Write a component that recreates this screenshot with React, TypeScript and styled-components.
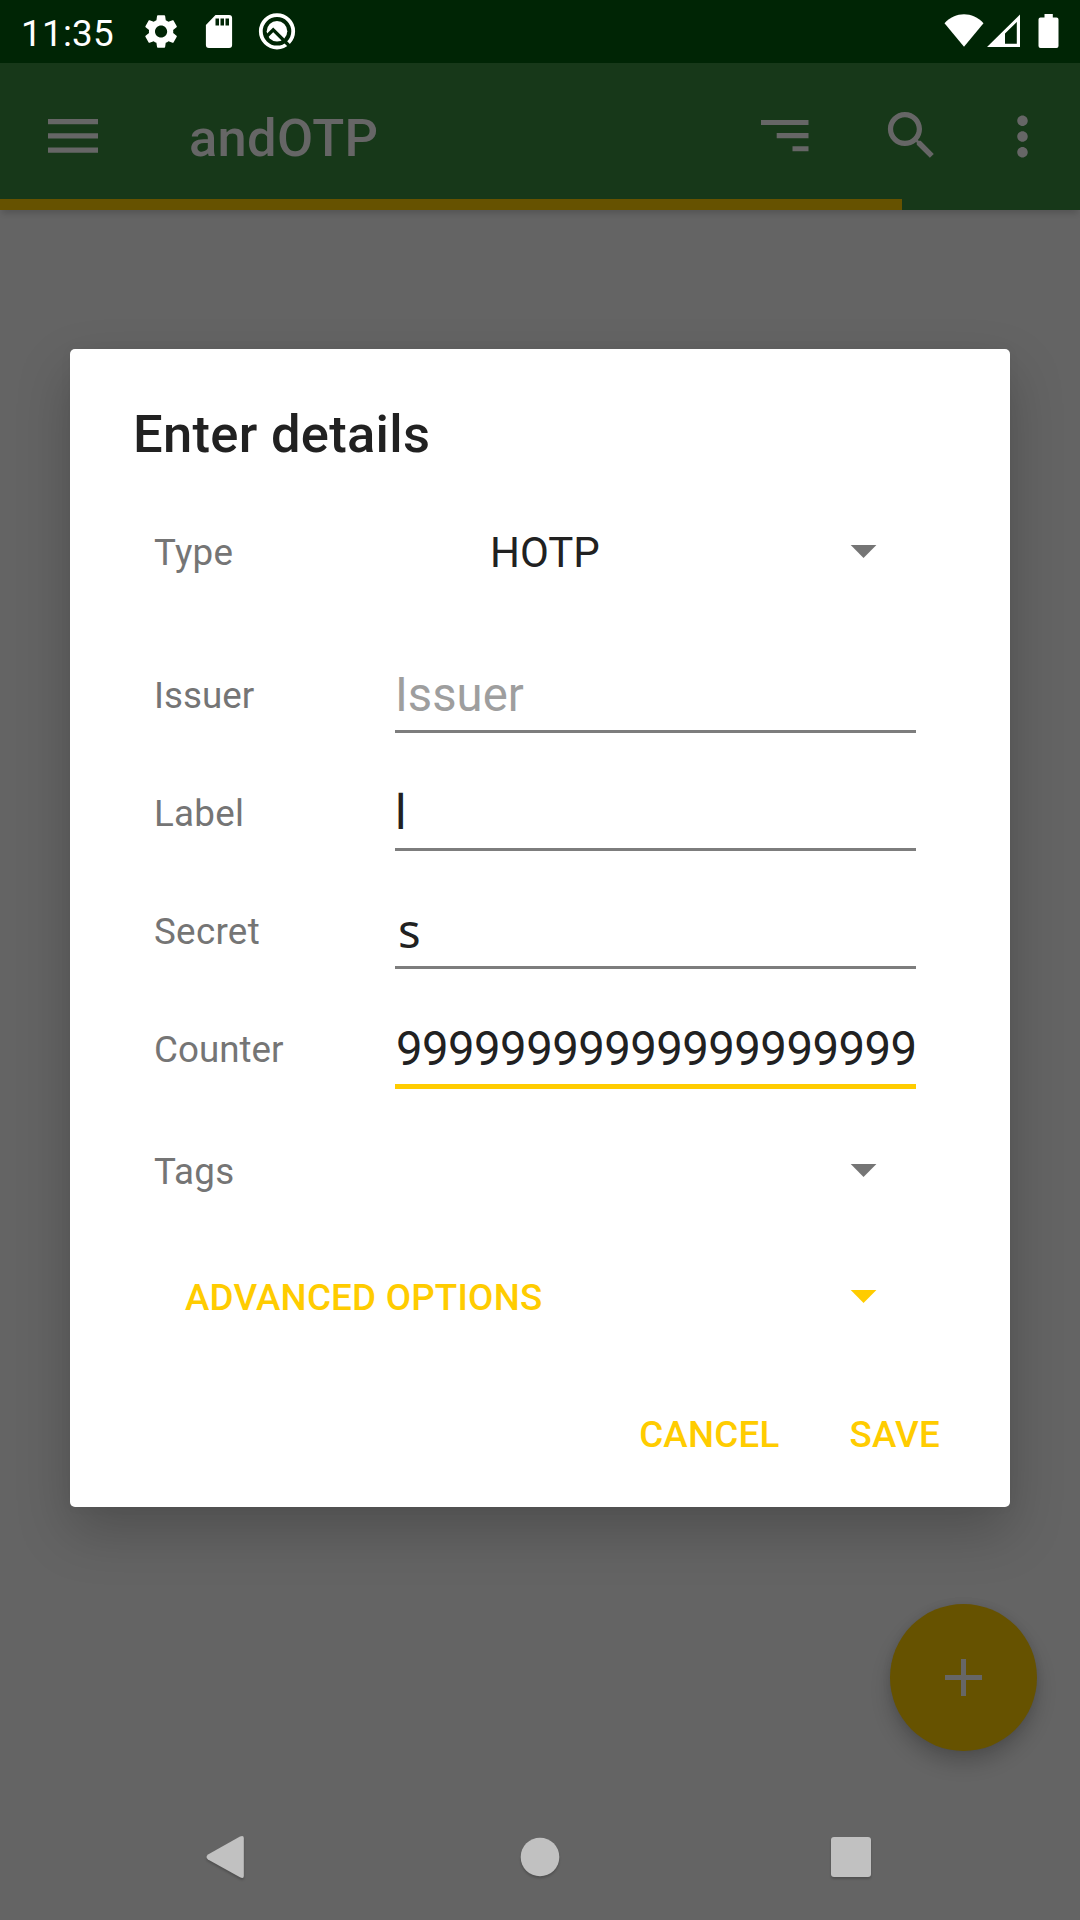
import React from "react";
import styled, { createGlobalStyle } from "styled-components";

const Global = createGlobalStyle`
  * { box-sizing: border-box; }
  html, body { margin: 0; padding: 0; background: #646464; }
  body { width: 1080px; height: 1920px; overflow: hidden; font-family: Roboto, "Noto Sans", sans-serif; }
`;

const Screen = styled.div`
  position: relative;
  width: 1080px;
  height: 1920px;
  display: flex;
  flex-direction: column;
  background: #646464;
`;

const StatusBar = styled.header`
  height: 63px;
  flex: none;
  display: flex;
  align-items: flex-start;
  background: #002505;
  color: #fff;
  padding: 0 21px 0 21px;
`;

const Clock = styled.time`
  width: 123px;
  font-size: 36.75px;
  line-height: 44px;
  padding-top: 12px;
  letter-spacing: 0.3px;
  white-space: nowrap;
`;

const StatusIcon = styled.svg<{ $w: number; $gap?: number }>`
  display: block;
  flex: none;
  width: ${(p) => p.$w}px;
  height: 63px;
  margin-right: ${(p) => p.$gap ?? 0}px;
`;

const Spacer = styled.div`
  flex: 1;
`;

const AppBar = styled.nav`
  height: 136px;
  flex: none;
  display: flex;
  align-items: center;
  background: #173819;
  color: #666;
  padding-left: 42px;
`;

const AppTitle = styled.h1`
  margin: 0 0 0 84px;
  flex: 1;
  font-size: 52.5px;
  font-weight: 500;
  line-height: 62px;
  letter-spacing: 0.3px;
  padding-top: 14px;
`;

const BarIcon = styled.svg<{ $gap?: number; $drop?: number }>`
  display: block;
  flex: none;
  width: 63px;
  height: 63px;
  margin-right: ${(p) => p.$gap ?? 0}px;
  margin-top: ${(p) => p.$drop ?? 11}px;
  fill: #666;
`;

const ProgressTrack = styled.div`
  height: 11px;
  flex: none;
  background: #173819;
  box-shadow: 0 5px 6px -2px rgba(0, 0, 0, 0.18);
`;

const Progress = styled.div`
  width: 902px;
  height: 11px;
  background: #665200;
`;

const Fab = styled.button`
  position: absolute;
  right: 43px;
  bottom: 169px;
  width: 147px;
  height: 147px;
  border: 0;
  padding: 0;
  border-radius: 50%;
  background: #665200;
  display: grid;
  place-items: center;
  box-shadow: 0 12px 20px rgba(0, 0, 0, 0.2), 0 0 8px rgba(0, 0, 0, 0.08);
`;

const NavBar = styled.footer`
  height: 126px;
  flex: none;
  display: flex;
  justify-content: space-between;
  align-items: center;
  padding: 0 197px 0 197px;
`;

const NavIcon = styled.svg`
  display: block;
  width: 64px;
  height: 64px;
  fill: #c1c1c1;
  filter: drop-shadow(0 2px 1px rgba(0, 0, 0, 0.2));
`;

const Dialog = styled.section`
  position: absolute;
  left: 70px;
  top: 349px;
  width: 940px;
  height: 1158px;
  border-radius: 5px;
  background: #fff;
  box-shadow: 0 24px 54px rgba(0, 0, 0, 0.21), 0 0 14px rgba(0, 0, 0, 0.03);
  display: flex;
  flex-direction: column;
`;

const DialogTitle = styled.h2`
  margin: 0;
  padding: 54px 63px 0;
  height: 144px;
  font-size: 52.5px;
  line-height: 62px;
  font-weight: 500;
  letter-spacing: 0.3px;
  color: #212121;
`;

const Row = styled.div<{ $h: number }>`
  height: ${(p) => p.$h}px;
  flex: none;
  display: flex;
  align-items: flex-start;
  padding-left: 84px;
`;

const Label = styled.label<{ $top: number; $track?: number }>`
  width: 241px;
  flex: none;
  padding-top: ${(p) => p.$top}px;
  font-size: 36.75px;
  line-height: 44px;
  letter-spacing: ${(p) => p.$track ?? 0}px;
  color: #757575;
`;

const Field = styled.div<{ $active?: boolean; $hint?: boolean; $top?: number }>`
  width: 521px;
  height: ${(p) => (p.$active ? 87 : 85)}px;
  padding: ${(p) => p.$top ?? 19}px 0 0 0;
  font-size: 47.25px;
  line-height: 56px;
  white-space: nowrap;
  color: ${(p) => (p.$hint ? "#9e9e9e" : "#212121")};
  border-bottom: ${(p) => (p.$active ? "5px solid #ffcc00" : "3px solid #7d7d7d")};
`;

const Digits = styled.span`
  letter-spacing: -0.53px;
  padding-left: 1px;
`;

const SecretText = styled.span`
  font-family: "Noto Sans", sans-serif;
  padding-left: 3px;
`;

const Choice = styled.div<{ $top: number }>`
  flex: 1;
  padding: ${(p) => p.$top}px 0 0 95px;
  font-size: 42px;
  line-height: 50px;
  color: #212121;
`;

const Arrow = styled.svg<{ $top: number; $accent?: boolean }>`
  display: block;
  flex: none;
  width: 27px;
  height: 13px;
  margin: ${(p) => p.$top}px 133px 0 auto;
  fill: ${(p) => (p.$accent ? "#ffcc00" : "#757575")};
`;

const TextButton = styled.button`
  border: 0;
  margin: 0;
  background: none;
  padding: 0;
  font: 500 36.75px/44px Roboto, "Noto Sans", sans-serif;
  letter-spacing: 0.22px;
  color: #ffcc00;
  white-space: nowrap;
`;

const AdvancedButton = styled(TextButton)`
  padding: 30px 0 0 31px;
`;

const Actions = styled.div`
  display: flex;
  justify-content: flex-end;
  gap: 70px;
  padding: 41px 70px 0 0;
`;

const Caret = ({ top, accent }: { top: number; accent?: boolean }) => (
  <Arrow $top={top} $accent={accent} viewBox="0 0 27 13">
    <path d="M0.700 0h25.700L13.550 13z" />
  </Arrow>
);

export default function App() {
  return (
    <Screen>
      <Global />
      <StatusBar>
        <Clock>11:35</Clock>
        <StatusIcon $w={34} $gap={27} viewBox="144 0 34 63">
          <path
            transform="translate(140.8 11.2) scale(1.69)"
            fill="#fff"
            d="M19.14 12.94c.04-.3.06-.61.06-.94 0-.32-.02-.64-.07-.94l2.03-1.58c.18-.14.23-.41.12-.61l-1.92-3.32c-.12-.22-.37-.29-.59-.22l-2.39.96c-.5-.38-1.03-.7-1.62-.94l-.36-2.54c-.04-.24-.24-.41-.48-.41h-3.84c-.24 0-.43.17-.47.41l-.36 2.54c-.59.24-1.13.57-1.62.94l-2.39-.96c-.22-.08-.47 0-.59.22L2.74 8.87c-.12.21-.08.47.12.61l2.03 1.58c-.05.3-.09.63-.09.94s.02.64.07.94l-2.03 1.58c-.18.14-.23.41-.12.61l1.92 3.32c.12.22.37.29.59.22l2.39-.96c.5.38 1.03.7 1.62.94l.36 2.54c.05.24.24.41.48.41h3.84c.24 0 .44-.17.47-.41l.36-2.54c.59-.24 1.13-.56 1.62-.94l2.39.96c.22.08.47 0 .59-.22l1.92-3.32c.12-.22.07-.47-.12-.61zM12 15.6c-1.98 0-3.6-1.62-3.6-3.6s1.62-3.6 3.6-3.6 3.6 1.62 3.6 3.6-1.62 3.6-3.6 3.6"
          />
        </StatusIcon>
        <StatusIcon $w={28} $gap={25} viewBox="205 0 28 63">
          <path
            fill="#fff"
            fillRule="evenodd"
            d="M215.5 15h13.6a3 3 0 0 1 3 3v27a3 3 0 0 1-3 3h-20.2a3 3 0 0 1-3-3V25zM215.5 18.5v7h3.5v-7zM220.5 18.5v7h3.5v-7zM225.5 18.5v7h3.5v-7z"
          />
        </StatusIcon>
        <StatusIcon $w={38} viewBox="258 0 38 63">
          <circle cx="277" cy="31.300" r="16.200" fill="none" stroke="#fff" strokeWidth="3.800" />
          <circle cx="277" cy="31.300" r="10.300" fill="#fff" />
          <path d="M266.500 36.500l6.700-6.700L289.500 46" fill="none" stroke="#002505" strokeWidth="3.300" />
        </StatusIcon>
        <Spacer />
        <StatusIcon $w={40} $gap={2} viewBox="944.5 0 40 63">
          <path fill="#fff" d="M945 23.2C956 11.3 973 11.3 984 23.2L964.500 46.700z" />
        </StatusIcon>
        <StatusIcon $w={34} $gap={18} viewBox="986 0 34 63">
          <path fill="#fff" fillRule="evenodd" d="M987 47L1020 14.500V47zM1005 33.500V43.700H1016.800V22z" />
        </StatusIcon>
        <StatusIcon $w={21} viewBox="1038.500 0 21 63">
          <path fill="#fff" d="M1045 14h8.300v3.400h3.700q2 0 2 2V46q0 2-2 2h-16q-2 0-2-2V19.400q0-2 2-2h4z" />
        </StatusIcon>
      </StatusBar>
      <AppBar>
        <BarIcon viewBox="0 0 63 63">
          <path d="M6 14h50v5.300H6zM6 28.200h50v5.300H6zM6 42.400h50v5.300H6z" />
        </BarIcon>
        <AppTitle>andOTP</AppTitle>
        <BarIcon $gap={64} viewBox="0 0 63 63">
          <path d="M8 15h47.500v5.100H8zM23.700 28.100h31.800v5.100H23.700zM39.500 41.200h16v5.100h-16z" />
        </BarIcon>
        <BarIcon $gap={48} $drop={9} viewBox="0 0 24 24">
          <path d="M15.500 14h-.79l-.28-.27C15.410 12.590 16 11.110 16 9.500 16 5.910 13.090 3 9.500 3S3 5.910 3 9.500 5.910 16 9.500 16c1.610 0 3.090-.590 4.230-1.570l.27.280v.79l5 4.990L20.490 19zm-6 0C7.010 14 5 11.990 5 9.500S7.010 5 9.500 5 14 7.010 14 9.500 11.990 14 9.500 14" />
        </BarIcon>
        <BarIcon $gap={26} viewBox="0 0 24 24">
          <path d="M12 8c1.100 0 2-.9 2-2s-.9-2-2-2-2 .9-2 2 .9 2 2 2m0 2c-1.100 0-2 .9-2 2s.9 2 2 2 2-.9 2-2-.9-2-2-2m0 6c-1.100 0-2 .9-2 2s.9 2 2 2 2-.9 2-2-.9-2-2-2" />
        </BarIcon>
      </AppBar>
      <ProgressTrack>
        <Progress />
      </ProgressTrack>
      <Spacer />
      <NavBar>
        <NavIcon viewBox="0 0 64 64">
          <path d="M11 29.500L43 11.500Q46.800 9.800 46.800 13V51Q46.800 54 43 52.200L11 34.500Q8 32 11 29.500" />
        </NavIcon>
        <NavIcon viewBox="0 0 64 64">
          <circle cx="32" cy="32" r="19.300" />
        </NavIcon>
        <NavIcon viewBox="0 0 64 64">
          <rect x="12" y="12" width="40" height="40" rx="3" />
        </NavIcon>
      </NavBar>
      <Fab aria-label="Add">
        <svg width="37" height="37" viewBox="0 0 37 37">
          <path d="M16 0h5v16h16v5H21v16h-5V21H0v-5h16z" fill="#666" />
        </svg>
      </Fab>
      <Dialog>
        <DialogTitle>Enter details</DialogTitle>
        <Row $h={155}>
          <Label $top={38} $track={0.3}>Type</Label>
          <Choice $top={35}>HOTP</Choice>
          <Caret top={52} />
        </Row>
        <Row $h={118}>
          <Label $top={26}>Issuer</Label>
          <Field $hint>Issuer</Field>
        </Row>
        <Row $h={118}>
          <Label $top={26} $track={0.25}>Label</Label>
          <Field>l</Field>
        </Row>
        <Row $h={118}>
          <Label $top={26} $track={0.3}>Secret</Label>
          <Field $top={18}>
            <SecretText>s</SecretText>
          </Field>
        </Row>
        <Row $h={118}>
          <Label $top={26}>Counter</Label>
          <Field $active>
            <Digits>99999999999999999999</Digits>
          </Field>
        </Row>
        <Row $h={126}>
          <Label $top={30} $track={0.2}>Tags</Label>
          <Caret top={44} />
        </Row>
        <Row $h={126}>
          <AdvancedButton>ADVANCED OPTIONS</AdvancedButton>
          <Caret top={44} accent />
        </Row>
        <Actions>
          <TextButton>CANCEL</TextButton>
          <TextButton>SAVE</TextButton>
        </Actions>
      </Dialog>
    </Screen>
  );
}
